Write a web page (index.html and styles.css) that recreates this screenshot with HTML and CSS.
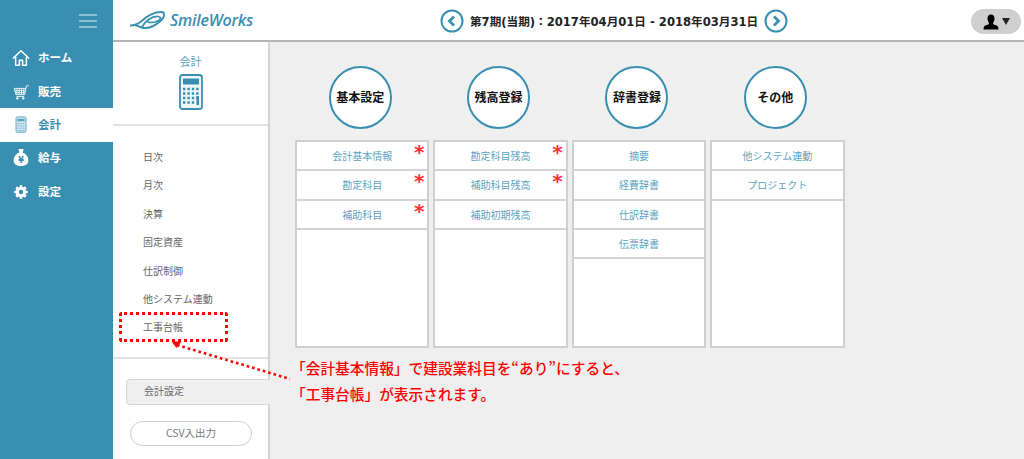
FILE: index.html
```html
<!DOCTYPE html>
<html lang="ja">
<head>
<meta charset="utf-8">
<title>SmileWorks 会計</title>
<link rel="stylesheet" href="styles.css">
</head>
<body>
<div class="app">
  <aside class="sidebar">
    <div class="burger"><span></span><span></span><span></span></div>
    <nav class="nav">
      <a class="nav-item"><svg class="nav-icon" viewBox="0 0 20 20"><path d="M1 10.500 10 2 19 10.500M4 8.500V18H8.200V12.500H11.800V18H16V8.500" fill="none" stroke="#fff" stroke-width="1.700" stroke-linejoin="round"/></svg><span>ホーム</span></a>
      <a class="nav-item"><svg class="nav-icon" viewBox="0 0 20 20"><path d="M2.500 6H15.500L14 13H4.500Z M15.500 6 16.300 3H18.500" fill="none" stroke="#fff" stroke-width="1"/><path d="M5.500 6.500V12.500M8 6.500V12.500M10.500 6.500V12.500M13 6.500V12.500M3 8.500H15M3.500 10.800H14.500M5 15H13.500" fill="none" stroke="#fff" stroke-width=".9"/><circle cx="6" cy="17" r="1.300" fill="#fff"/><circle cx="12.500" cy="17" r="1.300" fill="#fff"/></svg><span>販売</span></a>
      <a class="nav-item active"><svg class="nav-icon" viewBox="0 0 20 20"><rect x="4.500" y="1" width="11" height="17" rx="1.500" fill="#dcebf2" stroke="#5ba4c2" stroke-width="1.100"/><rect x="6" y="3" width="8" height="3" fill="#5ba4c2"/><path d="M6 8.500h8M6 11h8M6 13.500h8M6 16h8" stroke="#5ba4c2" stroke-dasharray="1.500 .6"/></svg><span>会計</span></a>
      <a class="nav-item"><svg class="nav-icon" viewBox="0 0 20 20"><path d="M7 0H13L11.800 4C16 5.500 18.200 9 18.200 12.500C18.200 17 14.500 19 10 19S1.800 17 1.800 12.500C1.800 9 4 5.500 8.200 4Z" fill="#fff"/><text x="10" y="15.500" class="yen">¥</text></svg><span>給与</span></a>
      <a class="nav-item"><svg class="nav-icon" viewBox="0 0 20 20"><circle cx="10" cy="10" r="4.200" fill="none" stroke="#fff" stroke-width="3.400"/><path d="M10 2.500V5M10 15V17.500M2.500 10H5M15 10H17.500M4.700 4.700 6.500 6.500M13.500 13.500 15.300 15.300M15.300 4.700 13.500 6.500M6.500 13.500 4.700 15.300" stroke="#fff" stroke-width="3"/></svg><span>設定</span></a>
    </nav>
  </aside>
  <div class="right">
    <header class="topbar">
      <div class="logo">
        <svg class="logo-mark" viewBox="0 0 35 18"><path d="M0 14.500C5 14.500 8 13 11 10.500C17 5 24 1 31 1C35 1 35.500 5 31 9.500C26 14 19 17.500 14 17C10 16.500 8 14.500 5 14" fill="none" stroke="#388fb1" stroke-width="1.900"/><path d="M12 16C15 10 22 5 28 5.500C32 6 31 9.500 25 11C20 12 16 11.500 18 9" fill="none" stroke="#388fb1" stroke-width="1.700"/></svg>
        <span class="logo-text">SmileWorks</span>
      </div>
      <div class="period">
        <svg class="arrow-btn" viewBox="0 0 24 24"><circle cx="12" cy="12" r="10.500" fill="#fff" stroke="#388fb1" stroke-width="2"/><path d="M14 7.500 9.500 12 14 16.500" fill="none" stroke="#388fb1" stroke-width="2.800"/></svg>
        <span class="period-text">第7期(当期)：2017年04月01日 - 2018年03月31日</span>
        <svg class="arrow-btn" viewBox="0 0 24 24"><circle cx="12" cy="12" r="10.500" fill="#fff" stroke="#388fb1" stroke-width="2"/><path d="M10 7.500 14.500 12 10 16.500" fill="none" stroke="#388fb1" stroke-width="2.800"/></svg>
      </div>
      <div class="user">
        <svg class="user-icon" viewBox="0 0 16 16"><path d="M8 0.500C5.500 0.500 4.500 2.500 4.500 4.500S5.500 8 6 9C6 10.500 4 11 2.500 11.500S.5 13.500.5 15.500H15.500C15.500 13.500 15 12 13.500 11.500S10 10.500 10 9C10.500 8 11.500 6.500 11.500 4.500S10.500 .5 8 .5Z" fill="#000"/></svg>
        <svg class="user-caret" viewBox="0 0 8 7"><path d="M0 0H8L4 7Z" fill="#222"/></svg>
      </div>
    </header>
    <div class="body">
      <section class="panel">
        <div class="panel-head">
          <div class="panel-title">会計</div>
          <svg class="panel-icon" viewBox="0 0 24 36"><rect x="1" y="1" width="22" height="34" rx="2.500" fill="#eef6f9" stroke="#388fb1" stroke-width="1.800"/><rect x="4" y="4.500" width="16" height="6" fill="#388fb1"/><path d="M4 15h16M4 19.500h16M4 24h16M4 28.500h12" stroke="#388fb1" stroke-width="2.400" stroke-dasharray="2.400 2"/><rect x="17.500" y="22" width="2.500" height="9" fill="#388fb1"/></svg>
        </div>
        <ul class="menu">
          <li>日次</li>
          <li>月次</li>
          <li>決算</li>
          <li>固定資産</li>
          <li>仕訳制御</li>
          <li>他システム連動</li>
          <li>工事台帳</li>
        </ul>
        <div class="panel-foot">
          <div class="settings-tab">会計設定</div>
          <button class="csv-btn">CSV入出力</button>
        </div>
      </section>
      <main class="content">
        <div class="col">
          <div class="circle">基本設定</div>
          <ul class="list">
            <li class="req">会計基本情報</li>
            <li class="req">勘定科目</li>
            <li class="req">補助科目</li>
          </ul>
        </div>
        <div class="col">
          <div class="circle">残高登録</div>
          <ul class="list">
            <li class="req">勘定科目残高</li>
            <li class="req">補助科目残高</li>
            <li>補助初期残高</li>
          </ul>
        </div>
        <div class="col">
          <div class="circle">辞書登録</div>
          <ul class="list">
            <li>摘要</li>
            <li>経費辞書</li>
            <li>仕訳辞書</li>
            <li>伝票辞書</li>
          </ul>
        </div>
        <div class="col">
          <div class="circle">その他</div>
          <ul class="list">
            <li>他システム連動</li>
            <li>プロジェクト</li>
          </ul>
        </div>
      </main>
    </div>
  </div>
  <div class="callout-box"></div>
  <svg class="callout-arrow" viewBox="0 0 120 50"><path d="M5 3 118 37" fill="none" stroke="#f00" stroke-width="2.600" stroke-dasharray="2.600 3"/><path d="M-.5 -.5 9.500 -.5 4.500 6Z" fill="#f00"/></svg>
  <div class="callout-text">
    <p>「会計基本情報」で建設業科目を“あり”にすると、</p>
    <p>「工事台帳」が表示されます。</p>
  </div>
</div>
</body>
</html>
```
FILE: styles.css
```css
* { box-sizing: border-box; }
html, body { margin: 0; height: 100%; overflow: hidden; }
body { font-family: "Noto Sans CJK JP", "Noto Sans", sans-serif; background: #efefef; }
ul { list-style: none; margin: 0; padding: 0; }
p { margin: 0; }

.app { position: relative; display: flex; width: 1024px; height: 459px; }

.sidebar { width: 113px; flex: none; background: #388fb1; }
.burger { height: 41.500px; display: flex; flex-direction: column; gap: 4px; align-items: flex-end; padding: 14px 16px 0 0; }
.burger span { width: 18px; height: 2px; background: #8fc0d4; }
.nav-item { display: flex; align-items: center; height: 33.400px; padding-left: 12px; gap: 8px; color: #fff; font-size: 11.500px; font-weight: 700; }
.nav-item span { margin-top: -2px; }
.nav-item.active { background: #fff; color: #388fb1; }
.nav-icon { width: 18px; height: 18px; flex: none; }
.yen { font-size: 9px; font-weight: 700; text-anchor: middle; fill: #388fb1; font-family: "DejaVu Sans", sans-serif; }

.right { flex: 1; display: flex; flex-direction: column; min-width: 0; }
.topbar { height: 42px; flex: none; background: #fff; border-bottom: 2px solid #b4b4b4; display: flex; align-items: center; padding-left: 17px; }
.logo { display: flex; align-items: center; gap: 5px; width: 310px; }
.logo-mark { width: 35px; height: 18px; }
.logo-text { font-family: "Open Sans", sans-serif; font-style: italic; font-weight: 600; font-size: 16px; color: #388fb1; letter-spacing: -.2px; }
.period { display: flex; align-items: center; gap: 6px; margin-top: 2px; }
.arrow-btn { width: 24px; height: 24px; flex: none; }
.period-text { font-family: "DejaVu Sans", "Noto Sans CJK JP", sans-serif; font-weight: 700; font-size: 11.600px; color: #222; white-space: nowrap; }
.user { margin: 3px 3px 0 auto; width: 50px; height: 25px; border-radius: 13px; background: #cfcfcf; display: flex; align-items: center; justify-content: center; gap: 3px; }
.user-icon { width: 16px; height: 16px; }
.user-caret { width: 8px; height: 7px; }

.body { flex: 1; display: flex; min-height: 0; }
.panel { width: 157px; flex: none; background: #fff; border-right: 2px solid #d4d4d4; display: flex; flex-direction: column; }
.panel-head { height: 84px; border-bottom: 2px solid #e2e2e2; display: flex; flex-direction: column; align-items: center; padding-top: 11px; gap: 5px; }
.panel-title { font-size: 11px; line-height: 16px; color: #5ba4c2; }
.panel-icon { width: 24px; height: 36px; }
.menu { height: 233px; padding: 17px 0 0 30px; border-bottom: 2px solid #e2e2e2; }
.menu li { height: 28.400px; line-height: 28.400px; font-size: 10px; color: #666; }
.panel-foot { flex: 1; display: flex; flex-direction: column; align-items: flex-start; padding: 20px 0 0 13px; }
.settings-tab { width: 144px; margin-right: -2px; height: 26px; line-height: 21px; padding-left: 17px; font-size: 10px; color: #666; background: #efefef; border: 1px solid #d8d8d8; border-right: none; border-radius: 4px 0 0 4px; }
.csv-btn { margin: 16px 0 0 4px; width: 122px; height: 25px; border-radius: 13px; border: 1px solid #cfcfcf; background: #fff; font: 10.500px "Noto Sans CJK JP", sans-serif; color: #777; padding: 0 0 2px; }

.content { flex: 1; display: flex; gap: 4px; padding: 23.500px 0 0 25px; align-items: flex-start; }
.col { width: 134.400px; display: flex; flex-direction: column; align-items: center; gap: 11.500px; }
.circle { width: 63px; height: 63px; margin-right: 4px; border-radius: 50%; background: #fff; border: 2px solid #388fb1; display: flex; align-items: center; justify-content: center; padding-bottom: 2px; font-size: 12px; font-weight: 700; color: #111; }
.list { width: 100%; height: 208px; background: #fff; border: 2px solid #cfcfcf; }
.list li { position: relative; height: 29.300px; line-height: 27px; text-align: center; font-size: 10px; color: #5ba4c2; border-bottom: 2px solid #d4d4d4; }
.list li.req::after { content: "*"; position: absolute; right: 3px; top: -1px; font: 700 20px/22px "DejaVu Sans", sans-serif; color: #f33; }

.callout-box { position: absolute; left: 119px; top: 312px; width: 109px; height: 30px; border: 3px dotted #f00; border-radius: 3px; }
.callout-arrow { position: absolute; left: 172px; top: 342px; width: 120px; height: 50px; overflow: visible; }
.callout-text { position: absolute; left: 291px; top: 355px; color: #f00; font-size: 14.700px; font-weight: 500; line-height: 26px; white-space: nowrap; }
```
